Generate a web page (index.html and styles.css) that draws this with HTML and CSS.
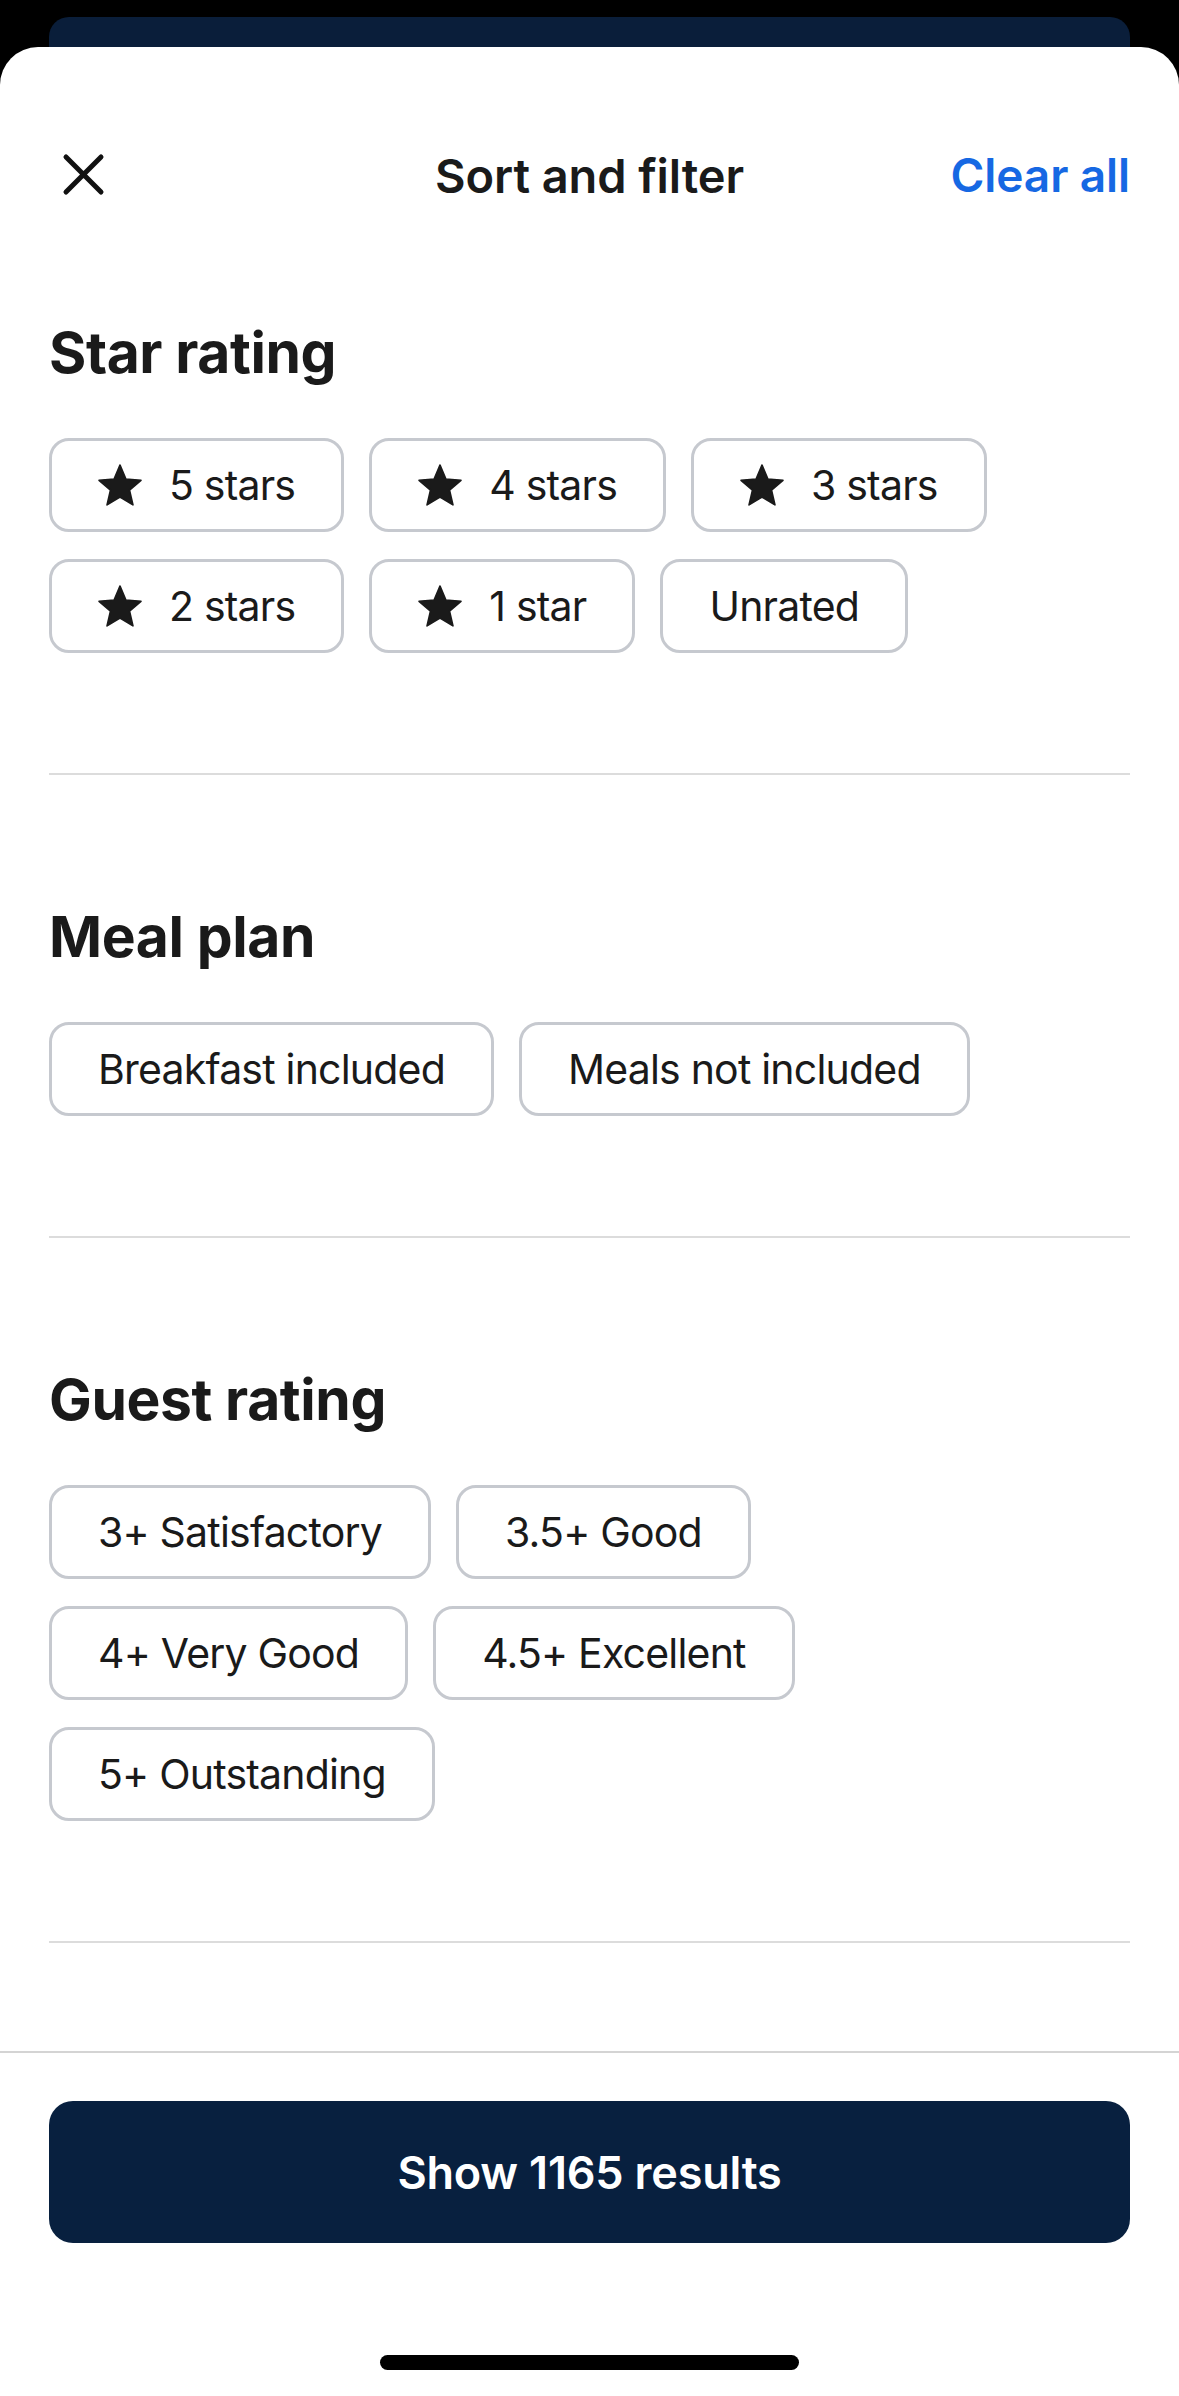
FILE: index.html
```html
<!DOCTYPE html>
<html lang="en">
<head>
<meta charset="utf-8">
<title>Sort and filter</title>
<link rel="stylesheet" href="styles.css">
</head>
<body>
<div class="backdrop"><div class="peek"></div></div>
<div class="sheet">
  <header class="header">
    <button class="close" aria-label="Close">
      <svg width="48" height="48" viewBox="0 0 48 48"><path d="M6 6L41 41M41 6L6 41" stroke="#111" stroke-width="5" stroke-linecap="round" fill="none"/></svg>
    </button>
    <h1 class="title">Sort and filter</h1>
    <a class="clear">Clear all</a>
  </header>
  <main class="content">
    <section class="section first">
      <h2 class="heading">Star rating</h2>
      <div class="rows">
        <div class="row">
          <span class="chip"><svg class="star" viewBox="1.5 1.5 21 20"><path d="M12 17.27L18.18 21l-1.64-7.03L22 9.24l-7.19-.61L12 2 9.19 8.63 2 9.24l5.46 4.73L5.82 21z"/></svg>5 stars</span>
          <span class="chip"><svg class="star" viewBox="1.5 1.5 21 20"><path d="M12 17.27L18.18 21l-1.64-7.03L22 9.24l-7.19-.61L12 2 9.19 8.63 2 9.24l5.46 4.73L5.82 21z"/></svg>4 stars</span>
          <span class="chip"><svg class="star" viewBox="1.5 1.5 21 20"><path d="M12 17.27L18.18 21l-1.64-7.03L22 9.24l-7.19-.61L12 2 9.19 8.63 2 9.24l5.46 4.73L5.82 21z"/></svg>3 stars</span>
        </div>
        <div class="row">
          <span class="chip"><svg class="star" viewBox="1.5 1.5 21 20"><path d="M12 17.27L18.18 21l-1.64-7.03L22 9.24l-7.19-.61L12 2 9.19 8.63 2 9.24l5.46 4.73L5.82 21z"/></svg>2 stars</span>
          <span class="chip"><svg class="star" viewBox="1.5 1.5 21 20"><path d="M12 17.27L18.18 21l-1.64-7.03L22 9.24l-7.19-.61L12 2 9.19 8.63 2 9.24l5.46 4.73L5.82 21z"/></svg>1 star</span>
          <span class="chip">Unrated</span>
        </div>
      </div>
    </section>
    <section class="section">
      <h2 class="heading">Meal plan</h2>
      <div class="rows">
        <div class="row">
          <span class="chip">Breakfast included</span>
          <span class="chip">Meals not included</span>
        </div>
      </div>
    </section>
    <section class="section">
      <h2 class="heading">Guest rating</h2>
      <div class="rows">
        <div class="row">
          <span class="chip">3+ Satisfactory</span>
          <span class="chip">3.5+ Good</span>
        </div>
        <div class="row">
          <span class="chip">4+ Very Good</span>
          <span class="chip">4.5+ Excellent</span>
        </div>
        <div class="row">
          <span class="chip">5+ Outstanding</span>
        </div>
      </div>
    </section>
  </main>
  <footer class="footer">
    <button class="show">Show 1165 results</button>
    <div class="home"></div>
  </footer>
</div>
</body>
</html>
```
FILE: styles.css
```css
* { box-sizing: border-box; }
html, body { margin: 0; padding: 0; }
body {
  width: 1179px;
  height: 2396px;
  background: #000;
  font-family: Inter, "Noto Sans", sans-serif;
  color: #1a1a1a;
  overflow: hidden;
}
.backdrop {
  height: 47px;
  padding: 17px 49px 0;
}
.peek {
  height: 30px;
  background: #0a1e3a;
  border-radius: 20px 20px 0 0;
}
.sheet {
  height: 2349px;
  background: #fff;
  border-radius: 38px 38px 0 0;
  display: flex;
  flex-direction: column;
  padding-top: 88px;
}
.header {
  height: 80px;
  padding: 0 49px;
  display: grid;
  grid-template-columns: 1fr auto 1fr;
  align-items: center;
}
.close {
  justify-self: start;
  border: 0;
  background: none;
  padding: 0;
  margin-left: 11px;
  width: 48px;
  height: 48px;
  display: block;
}
.close svg { display: block; }
.title {
  margin: 0;
  font-size: 47px;
  font-weight: 600;
  letter-spacing: -0.1px;
  color: #1a1a1a;
}
.clear {
  justify-self: end;
  font-size: 46px;
  font-weight: 600;
  color: #1668e3;
  letter-spacing: -0.1px;
}
.content {
  flex: 1;
  padding: 0 49px;
}
.section {
  padding: 130px 0 120px;
  border-bottom: 2px solid #dcdcdc;
}
.section.first { padding-top: 106px; }
.heading {
  margin: 0 0 53px;
  font-size: 57px;
  line-height: 64px;
  font-weight: 700;
  letter-spacing: -0.4px;
  color: #1a1a1a;
}
.rows {
  display: flex;
  flex-direction: column;
  gap: 27px;
}
.row {
  display: flex;
  gap: 25px;
}
.chip {
  height: 94px;
  display: inline-flex;
  align-items: center;
  gap: 27px;
  padding: 0 46px;
  border: 3px solid #c6c9cf;
  border-radius: 20px;
  font-size: 41px;
  font-weight: 400;
  letter-spacing: -0.8px;
  color: #1a1a1a;
  white-space: nowrap;
}
.star {
  width: 44px;
  height: 42px;
  fill: #1a1a1a;
  stroke: #1a1a1a;
  stroke-width: 0.8;
  stroke-linejoin: round;
  flex: none;
}
.footer {
  border-top: 2px solid #d4d4d4;
  padding: 48px 49px 26px;
  display: flex;
  flex-direction: column;
  align-items: center;
}
.show {
  width: 100%;
  height: 142px;
  border: 0;
  border-radius: 24px;
  background: #08203f;
  color: #fff;
  font-family: Inter, "Noto Sans", sans-serif;
  font-size: 45px;
  font-weight: 600;
  letter-spacing: -0.2px;
}
.home {
  margin-top: 112px;
  width: 419px;
  height: 15px;
  border-radius: 8px;
  background: #000;
}
```
